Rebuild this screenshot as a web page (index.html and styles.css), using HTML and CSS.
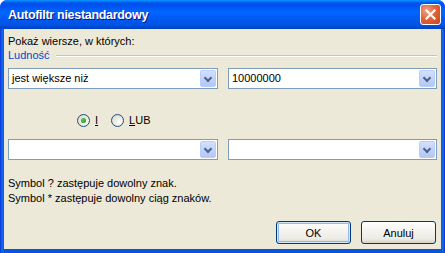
FILE: index.html
```html
<!DOCTYPE html>
<html lang="pl">
<head>
  <meta charset="UTF-8">
  <meta name="viewport" content="width=device-width, initial-scale=1.0">
  <title>Autofiltr niestandardowy</title>
  <link rel="stylesheet" href="styles.css">
</head>
<body>
  <div class="window">
    <!-- Title Bar -->
    <div class="titlebar">
      <span class="title">Autofiltr niestandardowy</span>
      <button class="close-btn" aria-label="Zamknij">
        <svg width="11" height="11" viewBox="0 0 11 11">
          <path d="M1.5 1.5 L9.5 9.5 M9.5 1.5 L1.5 9.5" stroke="#fff" stroke-width="2.2" stroke-linecap="square"/>
        </svg>
      </button>
    </div>

    <!-- Client Area -->
    <div class="client">
      <p class="intro">Pokaż wiersze, w których:</p>
      <div class="group-label">
        <span>Ludność</span>
        <span class="rule"></span>
      </div>

      <div class="combo-row">
        <div class="combo wide"><span class="combo-text">jest większe niż</span><span class="combo-btn"></span></div>
        <div class="combo"><span class="combo-text">10000000</span><span class="combo-btn"></span></div>
      </div>

      <div class="radios">
        <label class="radio"><span class="radio-dot checked"></span><span><u>I</u></span></label>
        <label class="radio"><span class="radio-dot"></span><span><u>L</u>UB</span></label>
      </div>

      <div class="combo-row second">
        <div class="combo wide"><span class="combo-text"></span><span class="combo-btn"></span></div>
        <div class="combo"><span class="combo-text"></span><span class="combo-btn"></span></div>
      </div>

      <div class="hints">
        <p>Symbol ? zastępuje dowolny znak.</p>
        <p>Symbol * zastępuje dowolny ciąg znaków.</p>
      </div>

      <div class="buttons">
        <button class="xp-btn default">OK</button>
        <button class="xp-btn">Anuluj</button>
      </div>
    </div>
  </div>
</body>
</html>
```

FILE: styles.css
```css
/* General Reset */
* {
  margin: 0;
  padding: 0;
  box-sizing: border-box;
}

body {
  width: 445px;
  height: 253px;
  overflow: hidden;
  background: #ffffff;
  font-family: "Liberation Sans", Arial, sans-serif;
  font-size: 11px;
  color: #000;
}

/* Window frame */
.window {
  width: 445px;
  height: 253px;
  display: flex;
  flex-direction: column;
  background: linear-gradient(to right, #0831d9 0, #166aee 2px, #0855dd 4px, #0855dd 441px, #166aee 443px, #0831d9 445px);
  border-radius: 7px 7px 0 0;
  overflow: hidden;
}

/* Title Bar */
.titlebar {
  height: 29px;
  display: flex;
  align-items: center;
  justify-content: space-between;
  padding: 0 6px 0 8px;
  background: linear-gradient(to bottom,
    #0997ff 0, #0053ee 3px, #0050ee 5px, #0066ff 12px,
    #0058f0 20px, #0054e3 25px, #0048d0 27px, #0041c4 29px);
  border-radius: 7px 7px 0 0;
}

.title {
  color: #fff;
  font-weight: bold;
  font-size: 12.5px;
  letter-spacing: -0.3px;
  text-shadow: 1px 1px 0 #0a1883;
  margin-top: 1px;
}

.close-btn {
  width: 21px;
  height: 21px;
  border: 1px solid #fff;
  border-radius: 3px;
  background: radial-gradient(circle at 30% 30%, #f0a48a 0, #e2643a 45%, #c9441c 100%);
  display: flex;
  align-items: center;
  justify-content: center;
  margin-right: -2px;
}

/* Client Area */
.client {
  flex: 1;
  margin: 0 4px 4px 4px;
  background: #ece9d8;
  padding: 5px 4px 0 4px;
  display: flex;
  flex-direction: column;
}

.intro {
  line-height: 14px;
}

.group-label {
  display: flex;
  align-items: center;
  line-height: 14px;
  color: #0046d5;
}

.rule {
  flex: 1;
  height: 2px;
  margin: 1px 0 0 6px;
  border-top: 1px solid #c8c5b4;
  border-bottom: 1px solid #ffffff;
}

/* Combo boxes */
.combo-row {
  display: flex;
  gap: 10px;
  margin-top: 6px;
}

.combo-row.second {
  margin-top: 12px;
}

.combo {
  width: 209px;
  height: 21px;
  border: 1px solid #7f9db9;
  background: #fff;
  display: flex;
  align-items: center;
  padding: 1px;
}

.combo.wide {
  width: 210px;
}

.combo-text {
  flex: 1;
  padding-left: 2px;
  line-height: 17px;
}

.combo-btn {
  width: 16px;
  height: 17px;
  border: 1px solid #b9cdf8;
  border-radius: 2px;
  background: linear-gradient(to bottom, #d3e0fd 0, #c1d3fb 50%, #b4c8f6 100%);
  position: relative;
}

.combo-btn::after {
  content: "";
  position: absolute;
  left: 4px;
  top: 4px;
  width: 4px;
  height: 4px;
  border-right: 2px solid #4d6185;
  border-bottom: 2px solid #4d6185;
  transform: rotate(45deg);
}

/* Radio buttons */
.radios {
  display: flex;
  gap: 13px;
  margin: 25px 0 0 69px;
  height: 13px;
  align-items: center;
}

.radio {
  display: flex;
  align-items: center;
  gap: 5px;
  line-height: 13px;
}

.radio-dot {
  width: 13px;
  height: 13px;
  border-radius: 50%;
  border: 1px solid #1c5180;
  background: radial-gradient(circle at 65% 65%, #ffffff 0, #e8e8e0 50%, #d0d0c8 100%);
  position: relative;
}

.radio-dot.checked::after {
  content: "";
  position: absolute;
  left: 3px;
  top: 3px;
  width: 5px;
  height: 5px;
  border-radius: 50%;
  background: radial-gradient(circle at 40% 40%, #55d051 0, #21a121 70%, #1a7a1a 100%);
}

/* Hints */
.hints {
  margin-top: 16px;
  line-height: 15px;
}

/* Buttons */
.buttons {
  display: flex;
  justify-content: flex-end;
  gap: 10px;
  margin-top: 15px;
  padding-right: 1px;
}

.xp-btn {
  width: 75px;
  height: 23px;
  border: 1px solid #003c74;
  border-radius: 3px;
  background: linear-gradient(to bottom, #ffffff 0, #f5f4ef 40%, #ecebe6 80%, #d6d0c5 100%);
  font-family: "Liberation Sans", Arial, sans-serif;
  font-size: 11px;
  color: #000;
}

.xp-btn.default {
  box-shadow: inset 0 0 0 1px #cee7ff, inset 0 0 0 2px #98b8ea;
}
```
